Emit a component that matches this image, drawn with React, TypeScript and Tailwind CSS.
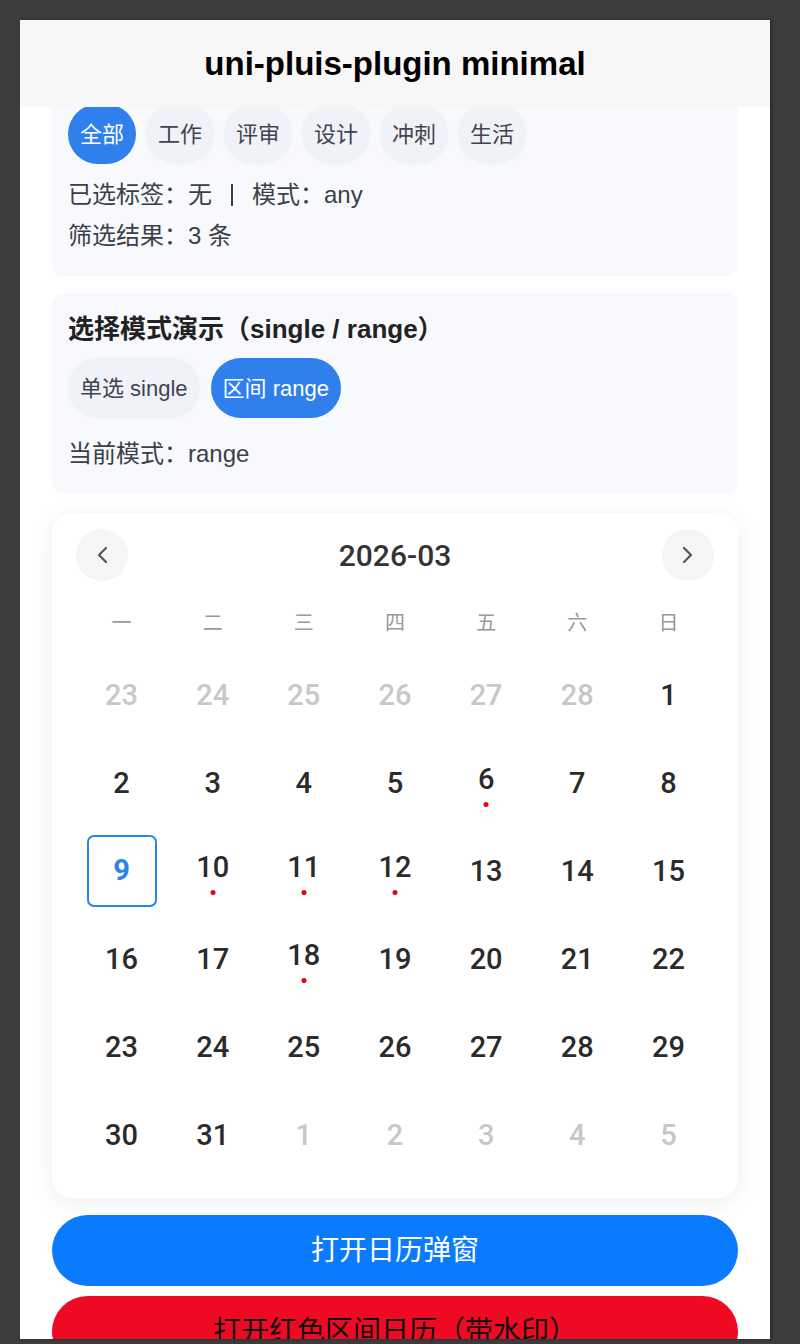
import React from "react";

const font = { fontFamily: '"Liberation Sans", "Noto Sans CJK SC", sans-serif' };
const numFont = { fontFamily: 'Roboto, "Liberation Sans", sans-serif' };

const tags = ["全部", "工作", "评审", "设计", "冲刺", "生活"];
const weekdays = ["一", "二", "三", "四", "五", "六", "日"];

type Day = { n: number; muted?: boolean; dot?: boolean; selected?: boolean };

const days: Day[] = [
  ...[23, 24, 25, 26, 27, 28].map((n) => ({ n, muted: true })),
  ...Array.from({ length: 31 }, (_, i) => {
    const n = i + 1;
    return { n, dot: [6, 10, 11, 12, 18].includes(n), selected: n === 9 };
  }),
  ...[1, 2, 3, 4, 5].map((n) => ({ n, muted: true })),
];

const Chip = ({ label, active }: { label: string; active?: boolean }) => (
  <div
    className={
      active
        ? "h-[60px] px-3 rounded-full bg-[#2f80ed] text-white flex items-center text-[22px]"
        : "h-[60px] px-3 rounded-full bg-[#eff2f7] text-[#3f4450] flex items-center text-[22px] shadow-[0_0_4px_rgba(0,0,0,0.03)]"
    }
  >
    {label}
  </div>
);

const Chevron = ({ dir }: { dir: "left" | "right" }) => (
  <svg width="12" height="18" viewBox="0 0 12 18" fill="none">
    <path
      d={dir === "left" ? "M10 2 L3 9 L10 16" : "M2 2 L9 9 L2 16"}
      stroke="#555"
      strokeWidth="2.2"
      strokeLinecap="round"
      strokeLinejoin="round"
    />
  </svg>
);

export default function App() {
  return (
    <div className="w-[800px] h-[1344px] bg-[#3c3c3c] pt-[20px] pl-[20px] overflow-hidden" style={font}>
      <div className="w-[750px] h-[1319px] bg-white flex flex-col overflow-hidden shadow-[2px_0_3px_rgba(0,0,0,0.35)]">
        <header className="relative z-10 h-[87px] shrink-0 bg-[#f7f7f7] flex items-center justify-center">
          <h1 className="text-[33px] font-semibold text-black">uni-pluis-plugin minimal</h1>
        </header>

        <main className="flex-1 px-[32px] flex flex-col">
          <section className="-mt-[3px] bg-[#f7f9fc] rounded-b-[12px] px-4 pb-[24px]">
            <div className="flex gap-[10px]">
              {tags.map((t, i) => (
                <Chip key={t} label={t} active={i === 0} />
              ))}
            </div>
            <p className="mt-[15px] h-[32px] leading-[32px] text-[24px] text-[#3a3f4a] flex items-center">
              <span>已选标签：无</span>
              <span className="mx-[19px] w-[2px] h-[22px] bg-[#3a3f4a]" />
              <span>模式：any</span>
            </p>
            <p className="mt-[9px] leading-[32px] text-[24px] text-[#3a3f4a]">筛选结果：3 条</p>
          </section>

          <section className="mt-[17px] bg-[#f7f9fc] rounded-[12px] px-4 pt-[20px] pb-[23px]">
            <h2 className="leading-[32px] text-[26px] font-bold text-[#222]">选择模式演示（single / range）</h2>
            <div className="mt-[13px] flex gap-[11px]">
              <Chip label="单选 single" />
              <Chip label="区间 range" active />
            </div>
            <p className="mt-[20px] leading-[32px] text-[24px] text-[#3a3f4a]">当前模式：range</p>
          </section>

          <section className="mt-[20px] bg-white rounded-[20px] shadow-[0_4px_24px_rgba(0,0,0,0.07)] px-[24px] pt-[16px] pb-[19px]">
            <div className="flex items-center justify-between">
              <button className="w-[52px] h-[52px] rounded-full bg-[#f4f5f7] flex items-center justify-center">
                <Chevron dir="left" />
              </button>
              <div className="text-[30px] font-medium text-[#333]" style={numFont}>
                2026-03
              </div>
              <button className="w-[52px] h-[52px] rounded-full bg-[#f4f5f7] flex items-center justify-center">
                <Chevron dir="right" />
              </button>
            </div>

            <div className="mt-[28px] grid grid-cols-7">
              {weekdays.map((w) => (
                <div key={w} className="h-[28px] flex items-center justify-center text-[20px] text-[#999]">
                  {w}
                </div>
              ))}
            </div>

            <div className="mt-[14px] grid grid-cols-7" style={numFont}>
              {days.map((d, i) => (
                <div key={i} className="relative h-[88px] flex items-center justify-center">
                  {d.selected ? (
                    <div className="w-[70px] h-[72px] rounded-[7px] border-2 border-[#2b85e4] flex items-center justify-center text-[29px] font-bold text-[#2b85e4]">
                      {d.n}
                    </div>
                  ) : (
                    <span
                      className={
                        (d.muted ? "text-[#c8c8c8] " : "text-[#2b2b2b] ") +
                        (d.dot ? "-translate-y-[4px] " : "") +
                        "text-[29px] font-medium leading-[32px]"
                      }
                    >
                      {d.n}
                    </span>
                  )}
                  {d.dot && (
                    <span className="absolute left-1/2 top-[calc(50%+19px)] -translate-x-1/2 w-[5px] h-[5px] rounded-full bg-[#e60012]" />
                  )}
                </div>
              ))}
            </div>
          </section>

          <button className="mt-[17px] h-[71px] shrink-0 rounded-full bg-[#0a7aff] text-white text-[28px] flex items-center justify-center">
            打开日历弹窗
          </button>
          <button className="mt-[10px] h-[71px] shrink-0 rounded-full bg-[#ee0a22] text-[#111] text-[28px] flex items-center justify-center">
            打开红色区间日历（带水印）
          </button>
        </main>
      </div>
    </div>
  );
}
